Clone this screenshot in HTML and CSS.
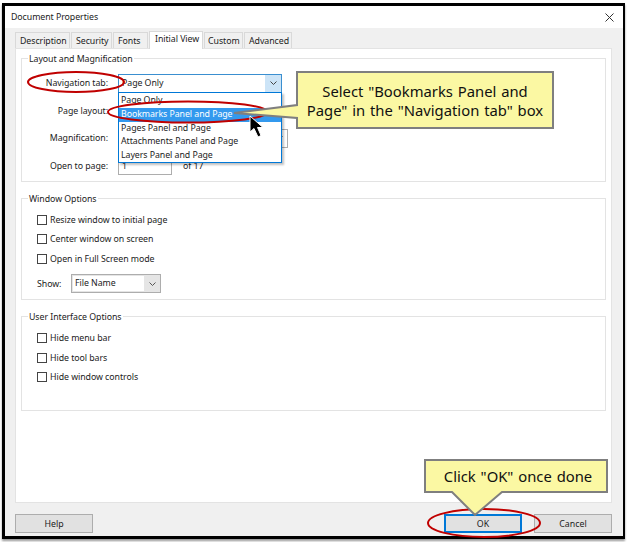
FILE: index.html
```html
<!DOCTYPE html>
<html lang="en">
<head>
<meta charset="utf-8">
<title>Document Properties</title>
<link rel="stylesheet" href="styles.css">
</head>
<body>
<div class="page">
  <div class="dialog">
    <header class="titlebar">
      <span>Document Properties</span>
      <svg class="close" viewBox="0 0 9 9" width="9" height="9"><path d="M0.5 0.5L8.5 8.5M8.5 0.5L0.5 8.5" fill="none" stroke="#333" stroke-width="1"/></svg>
    </header>
    <div class="content">
      <nav class="tabs">
        <span class="tab t1">Description</span>
        <span class="tab t2">Security</span>
        <span class="tab t3">Fonts</span>
        <span class="tab t4 active">Initial View</span>
        <span class="tab t5">Custom</span>
        <span class="tab t6">Advanced</span>
      </nav>
      <main class="panel">
        <section class="group group-layout">
          <div class="legend">Layout and Magnification</div>
          <div class="form">
            <div class="row">
              <label class="label">Navigation tab:</label>
              <div class="combo focus">
                <span class="value">Page Only</span>
                <span class="arrow"><svg viewBox="0 0 7 4" width="7" height="4"><path d="M0.500 0.500L3.500 3.500L6.500 0.500" fill="none" stroke="#444" stroke-width="1"/></svg></span>
                <ul class="dropdown">
                  <li>Page Only</li>
                  <li class="selected">Bookmarks Panel and Page</li>
                  <li>Pages Panel and Page</li>
                  <li>Attachments Panel and Page</li>
                  <li>Layers Panel and Page</li>
                </ul>
              </div>
            </div>
            <div class="row">
              <label class="label">Page layout:</label>
              <div class="combo"></div>
            </div>
            <div class="row">
              <label class="label">Magnification:</label>
              <div class="combo wide">
                <span class="arrow"><svg viewBox="0 0 7 4" width="7" height="4"><path d="M0.500 0.500L3.500 3.500L6.500 0.500" fill="none" stroke="#444" stroke-width="1"/></svg></span>
              </div>
            </div>
            <div class="row">
              <label class="label">Open to page:</label>
              <div class="pageinput">1</div>
              <span class="of">of 17</span>
            </div>
          </div>
        </section>
        <section class="group group-window">
          <div class="legend">Window Options</div>
          <div class="checks checks-window">
            <div class="check"><i class="box"></i>Resize window to initial page</div>
            <div class="check"><i class="box"></i>Center window on screen</div>
            <div class="check"><i class="box"></i>Open in Full Screen mode</div>
          </div>
          <div class="show">
            <span>Show:</span>
            <div class="select"><span class="value">File Name</span>
              <span class="arrow"><svg viewBox="0 0 7 4" width="7" height="4"><path d="M0.500 0.500L3.500 3.500L6.500 0.500" fill="none" stroke="#555" stroke-width="1"/></svg></span>
            </div>
          </div>
        </section>
        <section class="group group-ui">
          <div class="legend">User Interface Options</div>
          <div class="checks">
            <div class="check"><i class="box"></i>Hide menu bar</div>
            <div class="check"><i class="box"></i>Hide tool bars</div>
            <div class="check"><i class="box"></i>Hide window controls</div>
          </div>
        </section>
      </main>
      <footer class="footer">
        <button class="btn">Help</button>
        <div class="footer-right">
          <button class="btn primary">OK</button>
          <button class="btn">Cancel</button>
        </div>
      </footer>
    </div>
  </div>
  <svg class="overlay" viewBox="0 0 627 542" width="627" height="542">
    <g fill="none" stroke="#c00000" stroke-width="2">
      <ellipse cx="76" cy="82" rx="48" ry="10"/>
      <ellipse cx="188" cy="112" rx="80" ry="10.5"/>
      <ellipse cx="484" cy="523" rx="56" ry="14"/>
    </g>
    <path d="M297 72H553V128H297V118L234 113L297 105Z" fill="#fbf8a3" stroke="#7f7f7f" stroke-width="2"/>
    <path d="M425 460H607V492H502L475 515L452 492H425Z" fill="#fbf8a3" stroke="#7f7f7f" stroke-width="2"/>
    <g class="note">
      <text x="425" y="97">Select "Bookmarks Panel and</text>
      <text x="425" y="116">Page" in the "Navigation tab" box</text>
      <text x="518" y="482">Click "OK" once done</text>
    </g>
    <path d="M250 116V132L254 128.500L258 137L261 135.500L257.500 127.500H263Z" fill="#000" stroke="#fff" stroke-width="1"/>
  </svg>
</div>
</body>
</html>
```
FILE: styles.css
```css
* { box-sizing: border-box; }
html, body { margin: 0; padding: 0; background: #fff; }
body { font-family: "Noto Sans", "Open Sans", sans-serif; font-size: 8.8px; letter-spacing: -0.06px; color: #222; }
.page { position: relative; width: 627px; height: 542px; overflow: hidden; }
.dialog {
  margin: 3px 0 0 2px;
  width: 623px;
  height: 536px;
  border: 3px solid #000;
  border-right-width: 2px;
  background: #f0f0f0;
  box-shadow: 0 2px 2px #999;
  display: flex;
  flex-direction: column;
}
.titlebar {
  height: 22px;
  flex: none;
  background: #fff;
  display: flex;
  align-items: center;
  justify-content: space-between;
  padding: 0 9px 0 6px;
}
.content { flex: 1; display: flex; flex-direction: column; padding: 3px 11px 0 10px; }
.tabs { display: flex; height: 17px; flex: none; align-items: flex-end; position: relative; z-index: 1; gap: 1px; }
.tab {
  height: 16px;
  padding-left: 4px;
  border: 1px solid #d9d9d9;
  border-bottom: 0;
  background: #f0f0f0;
  line-height: 16px;
  white-space: nowrap;
}
.t1 { width: 55px; }
.t2 { width: 41px; padding-left: 4px; }
.t3 { width: 35px; padding-left: 4px; }
.t4 { width: 54px; padding-left: 5px; }
.t5 { width: 39px; padding-left: 3px; }
.t6 { width: 48px; padding-left: 4px; }
.tab.active { height: 18px; background: #fff; line-height: 15px; margin-bottom: -1px; }
.panel {
  height: 455px;
  flex: none;
  background: #fff;
  border: 1px solid #e3e3e3;
  padding: 9px 5px 0;
  display: flex;
  flex-direction: column;
  gap: 16px;
}
.group { border: 1px solid #e3e3e3; padding: 0 15px; flex: none; }
.group-layout { height: 124px; }
.group-window { height: 102px; }
.group-ui { height: 95px; }
.legend {
  margin: -6px 0 0 -9px;
  width: fit-content;
  padding: 0 1px;
  background: #fff;
  line-height: 13px;
  height: 13px;
}
.form { margin: 8px 0 0 -15px; display: flex; flex-direction: column; gap: 9px; }
.row { display: flex; align-items: center; height: 18.500px; }
.label { width: 86px; text-align: right; margin-right: 10px; flex: none; }
.combo {
  position: relative;
  width: 164px;
  height: 18.500px;
  border: 1px solid #adadad;
  background: #fff;
  display: flex;
  align-items: center;
  justify-content: space-between;
  padding-left: 3px;
}
.combo.focus { border-color: #3a8fd0; }
.combo.wide { width: 170px; justify-content: flex-end; }
.arrow { width: 16px; flex: none; align-self: stretch; display: flex; align-items: center; justify-content: center; }
.focus > .arrow { background: #cce4f7; }
.dropdown {
  position: absolute;
  left: -1px;
  top: 17px;
  width: 164px;
  height: 71px;
  margin: 0;
  padding: 1px 0 0;
  list-style: none;
  background: #fff;
  border: 1px solid #0078d7;
  box-shadow: 2px 2px 2px rgba(0,0,0,.25);
  z-index: 2;
}
.dropdown li { height: 13.800px; line-height: 13.800px; padding-left: 2px; white-space: nowrap; }
.dropdown li.selected { background: #3399ee; color: #fff; }
.pageinput { width: 54px; height: 18.500px; border: 1px solid #adadad; padding-left: 3px; line-height: 16px; }
.of { margin-left: 11px; }
.checks { margin-top: 7px; display: flex; flex-direction: column; gap: 5.500px; }
.checks-window { margin-top: 6.500px; }
.check { display: flex; align-items: center; height: 14px; }
.box { display: block; width: 10px; height: 10px; border: 1px solid #444; background: #fff; margin-right: 3px; flex: none; }
.show { display: flex; align-items: center; margin-top: 8.500px; }
.show > span { width: 34px; }
.select {
  width: 90px;
  height: 19px;
  border: 1px solid #adadad;
  padding: 1px 0 1px 1px;
  background: #e5e5e5;
  display: flex;
  align-items: center;
  justify-content: space-between;
}
.select .value { flex: 1; align-self: stretch; background: #fff; padding-left: 2px; line-height: 15px; }
.footer { display: flex; justify-content: space-between; margin-top: 11px; }
.footer-right { display: flex; gap: 12px; }
.btn {
  width: 78px;
  height: 19px;
  padding: 0;
  font: inherit;
  color: #222;
  background: #e1e1e1;
  border: 1px solid #adadad;
}
.btn.primary { border: 2px solid #0078d7; }
.overlay { position: absolute; left: 0; top: 0; z-index: 5; pointer-events: none; }
.note { font-family: "Noto Sans", "Open Sans", sans-serif; font-size: 14.800px; letter-spacing: 0; word-spacing: 1px; fill: #111; text-anchor: middle; }
```
